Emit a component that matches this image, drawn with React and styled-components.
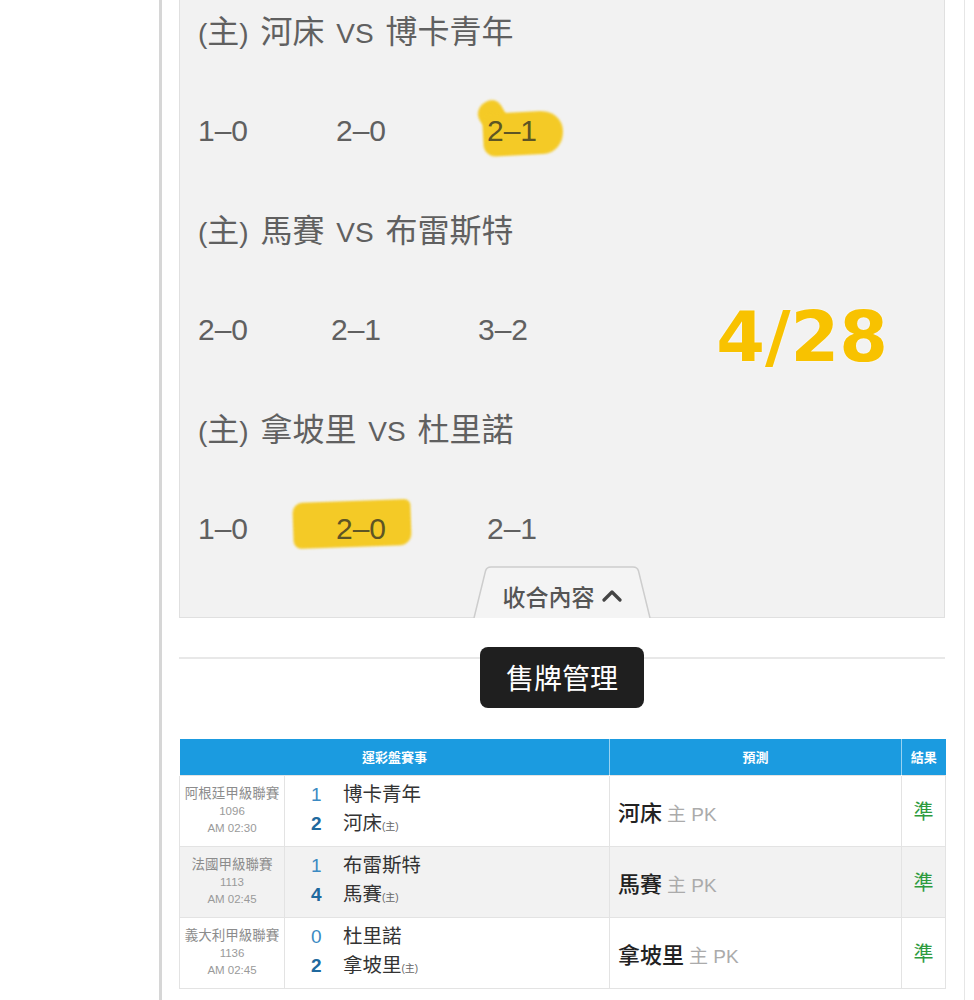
import React from 'react';
import styled, { createGlobalStyle, css } from 'styled-components';

const GlobalStyle = createGlobalStyle`
  body {
    margin: 0;
    background: #fff;
    font-family: "Liberation Sans", "Noto Sans CJK TC", sans-serif;
  }
`;

const Frame = styled.div({
    boxSizing: 'border-box',
    marginLeft: '159px',
    width: '806px',
    minHeight: '1000px',
    borderLeft: '3px solid #d6d6d6',
    borderRight: '1px solid #e6e6e6',
    padding: '0 19px 0 17px',
})

const Panel = styled.div({
    display: 'flex',
    flexDirection: 'column',
    background: '#f2f2f2',
    border: '1px solid #e0e0e0',
    borderTop: 0,
    padding: '12px 18px 0',
})

const Lines = styled.div({
    display: 'flex',
    flexDirection: 'column',
    gap: '59.4px',
})

const Match = styled.div({
    height: '40px',
    fontSize: '28px',
    lineHeight: '40px',
    color: '#606060',
    whiteSpace: 'nowrap',
    wordSpacing: '4px',
})

const Name = styled.span({
    fontSize: '32px',
    lineHeight: '40px',
    wordSpacing: 0,
})

const ScoreRow = styled.div({
    display: 'flex',
    alignItems: 'center',
    height: '40px',
    fontSize: '30px',
    lineHeight: '40px',
    color: '#606060',
})

const marker = css`
  content: "";
  position: absolute;
  z-index: -1;
  background: #f4ca26;
  filter: blur(1px);
  pointer-events: none;
`

const Score = styled.span`
  position: relative;
  display: inline-block;
  flex-shrink: 0;
  width: ${({ $w }) => ($w ? `${$w}px` : 'auto')};
  ${({ $hl }) => $hl && css`
    isolation: isolate;
    color: #5e5524;
    &::after {
      ${marker};
      left: ${$hl.l}px;
      top: ${$hl.t}px;
      width: ${$hl.w}px;
      height: ${$hl.h}px;
      border-radius: ${$hl.r};
      transform: rotate(${$hl.rot}deg);
    }
  `}
  ${({ $hl }) => $hl && $hl.tail && css`
    &::before {
      ${marker};
      left: ${$hl.tail.l}px;
      top: ${$hl.tail.t}px;
      width: ${$hl.tail.w}px;
      height: ${$hl.tail.h}px;
      border-radius: 50% 40% 30% 50%;
      transform: rotate(${$hl.tail.rot}deg);
    }
  `}
`

const BigDate = styled.span({
    marginLeft: 'auto',
    marginRight: '38px',
    paddingTop: '14px',
    fontFamily: '"DejaVu Sans", sans-serif',
    fontSize: '70px',
    fontWeight: 700,
    color: '#f8c200',
    textShadow: '0 0 2px #fff',
})

const Tab = styled.div({
    position: 'relative',
    alignSelf: 'center',
    width: '178px',
    height: '52px',
    marginTop: '17px',
    marginBottom: '-1px',
    display: 'flex',
    alignItems: 'center',
    justifyContent: 'center',
    paddingTop: '8px',
    boxSizing: 'border-box',
})

const TabShape = styled.svg({
    position: 'absolute',
    left: 0,
    top: 0,
})

const TabLabel = styled.span({
    position: 'relative',
    display: 'flex',
    alignItems: 'center',
    gap: '7px',
    fontSize: '23px',
    fontWeight: 500,
    color: '#555',
})

const Divider = styled.div({
    display: 'flex',
    flexDirection: 'column',
    alignItems: 'center',
    marginTop: '39px',
    borderTop: '2px solid #e8e8e8',
})

const DarkButton = styled.div({
    marginTop: '-12px',
    height: '61px',
    padding: '0 26px',
    display: 'flex',
    alignItems: 'center',
    background: '#1f1f1f',
    borderRadius: '8px',
    color: '#fff',
    fontSize: '28px',
})

const Table = styled.table({
    width: '100%',
    marginTop: '31px',
    borderCollapse: 'collapse',
    tableLayout: 'fixed',
})

const Th = styled.th({
    height: '36px',
    padding: 0,
    background: '#1b9be0',
    color: '#fff',
    fontSize: '13px',
    fontWeight: 700,
    textAlign: 'center',
    borderLeft: '1px solid rgba(255,255,255,0.55)',
    ':first-child': {
        borderLeft: 0
    },
})

const Tr = styled.tr(({ $alt }) => {
    return {
        background: $alt ? '#f2f2f2' : '#fff',
    }
})

const Td = styled.td(({ $align = 'left', $pl = 0 }) => {
    return {
        height: '70px',
        padding: `0 0 0 ${$pl}px`,
        border: '1px solid #e3e3e3',
        textAlign: $align,
        verticalAlign: 'middle',
    }
})

const League = styled.div({
    fontSize: '13.5px',
    lineHeight: '19px',
    color: '#8c8c8c',
    whiteSpace: 'nowrap',
})

const Meta = styled.div({
    fontSize: '11.5px',
    lineHeight: '17px',
    color: '#9a9a9a',
})

const TeamLine = styled.div({
    display: 'flex',
    alignItems: 'baseline',
    lineHeight: '29px',
})

const Goal = styled.span(({ $win }) => {
    return {
        width: '32px',
        fontSize: '19px',
        fontWeight: $win ? 700 : 400,
        color: $win ? '#20699e' : '#3b8ac2',
    }
})

const Team = styled.span({
    fontSize: '19.5px',
    color: '#333',
})

const Host = styled.span({
    fontSize: '10px',
    color: '#666',
})

const Pick = styled.span({
    fontSize: '22px',
    fontWeight: 500,
    color: '#222',
})

const PickNote = styled.span({
    marginLeft: '5px',
    fontSize: '19px',
    color: '#ababab',
})

const Hit = styled.span({
    fontSize: '20px',
    color: '#2e9b3e',
})

const matches = [
    {
        home: '河床',
        away: '博卡青年',
        scores: [
            { text: '1–0', w: 138 },
            { text: '2–0', w: 151 },
            {
                text: '2–1',
                hl: {
                    l: -4, w: 80, t: 1, h: 43, r: '10px 22px 20px 12px / 10px 20px 22px 12px', rot: -3,
                    tail: { l: -9, t: -10, w: 26, h: 26, rot: -30 },
                },
            },
        ],
    },
    {
        home: '馬賽',
        away: '布雷斯特',
        scores: [
            { text: '2–0', w: 133 },
            { text: '2–1', w: 147 },
            { text: '3–2' },
        ],
        date: '4/28',
    },
    {
        home: '拿坡里',
        away: '杜里諾',
        scores: [
            { text: '1–0', w: 138 },
            { text: '2–0', w: 151, hl: { l: -43, w: 118, t: -8, h: 46, r: '10px 6px 12px 8px', rot: -2 } },
            { text: '2–1' },
        ],
    },
]

const rows = [
    { league: '阿根廷甲級聯賽', no: '1096', time: 'AM 02:30', away: '博卡青年', home: '河床', ag: 1, hg: 2, pick: '河床' },
    { league: '法國甲級聯賽', no: '1113', time: 'AM 02:45', away: '布雷斯特', home: '馬賽', ag: 1, hg: 4, pick: '馬賽' },
    { league: '義大利甲級聯賽', no: '1136', time: 'AM 02:45', away: '杜里諾', home: '拿坡里', ag: 0, hg: 2, pick: '拿坡里' },
]

function App() {
    return (
        <>
            <GlobalStyle />
            <Frame>
                <Panel>
                    <Lines>
                        {matches.map((m, idx) => (
                            <React.Fragment key={idx}>
                                <Match>(<Name>主</Name>) <Name>{m.home}</Name> VS <Name>{m.away}</Name></Match>
                                <ScoreRow>
                                    {m.scores.map((s, i) => (
                                        <Score key={i} $w={s.w} $hl={s.hl}>{s.text}</Score>
                                    ))}
                                    {m.date && <BigDate>{m.date}</BigDate>}
                                </ScoreRow>
                            </React.Fragment>
                        ))}
                    </Lines>
                    <Tab>
                        <TabShape width="178" height="52" viewBox="0 0 178 52">
                            <path d="M1 52 L12.5 5 Q13.6 1 18 1 L160 1 Q164.4 1 165.5 5 L177 52 Z" fill="#f4f4f4" />
                            <path d="M1 52 L12.5 5 Q13.6 1 18 1 L160 1 Q164.4 1 165.5 5 L177 52" fill="none" stroke="#cdcdcd" strokeWidth="1.5" />
                        </TabShape>
                        <TabLabel>
                            收合內容
                            <svg width="20" height="13" viewBox="0 0 20 13">
                                <polyline points="2,11 10,3 18,11" fill="none" stroke="#444" strokeWidth="3.2" strokeLinecap="round" strokeLinejoin="round" />
                            </svg>
                        </TabLabel>
                    </Tab>
                </Panel>
                <Divider>
                    <DarkButton>售牌管理</DarkButton>
                </Divider>
                <Table>
                    <colgroup>
                        <col style={{ width: '105px' }} />
                        <col style={{ width: '325px' }} />
                        <col style={{ width: '292px' }} />
                        <col style={{ width: '44px' }} />
                    </colgroup>
                    <thead>
                        <tr>
                            <Th colSpan={2}>運彩盤賽事</Th>
                            <Th>預測</Th>
                            <Th>結果</Th>
                        </tr>
                    </thead>
                    <tbody>
                        {rows.map((r, idx) => (
                            <Tr key={idx} $alt={idx === 1}>
                                <Td $align="center">
                                    <League>{r.league}</League>
                                    <Meta>{r.no}</Meta>
                                    <Meta>{r.time}</Meta>
                                </Td>
                                <Td $pl={26}>
                                    <TeamLine>
                                        <Goal $win={r.ag > r.hg}>{r.ag}</Goal>
                                        <Team>{r.away}</Team>
                                    </TeamLine>
                                    <TeamLine>
                                        <Goal $win={r.hg > r.ag}>{r.hg}</Goal>
                                        <Team>{r.home}</Team>
                                        <Host>(主)</Host>
                                    </TeamLine>
                                </Td>
                                <Td $pl={8}>
                                    <Pick>{r.pick}</Pick>
                                    <PickNote>主 PK</PickNote>
                                </Td>
                                <Td $align="center">
                                    <Hit>準</Hit>
                                </Td>
                            </Tr>
                        ))}
                    </tbody>
                </Table>
            </Frame>
        </>
    )
}

export default App;
